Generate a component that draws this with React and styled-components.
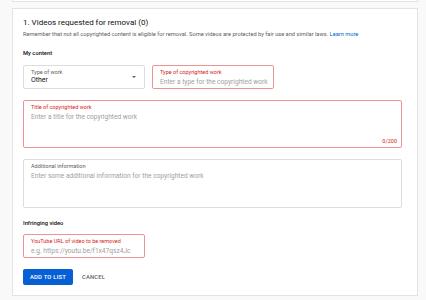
import React from 'react';
import styled, { createGlobalStyle } from 'styled-components';

const Global = createGlobalStyle`
  html, body { margin: 0; padding: 0; background: #f9f9f9; }
  body { font-family: Roboto, "Liberation Sans", sans-serif; color: #0d0d0d; }
`;

const Page = styled.div`
  width: 426px; height: 300px; box-sizing: border-box;
  padding: 0 8px 0 12px; overflow: hidden;
  display: flex; flex-direction: column; gap: 6px;
`;

const PrevCard = styled.div`
  height: 1px; background: #fff; border: 1px solid #e3e3e3; border-top: 0;
`;

const Card = styled.section`
  background: #fff; border: 1px solid #e3e3e3;
  padding: 9px 15px 10px 10px;
  display: flex; flex-direction: column;
`;

const Heading = styled.h2`
  margin: 0; font-size: 8px; font-weight: 400; line-height: 10px; color: #0d0d0d;
`;

const Note = styled.p`
  margin: 2px 0 0; font-size: 5.7px; line-height: 8px; color: #606060;
  a { color: #065fd4; text-decoration: none; }
`;

const Section = styled.h3`
  margin: 11px 0 ${p => p.$mb}px; font-size: 5.8px; font-weight: 500; line-height: 8px; color: #0d0d0d;
`;

const Row = styled.div`
  display: flex; gap: 7px; margin-bottom: 11px;
`;

const Field = styled.div`
  position: relative; box-sizing: border-box;
  width: ${p => p.$w}px;
  height: ${p => p.$h}px;
  border: 1px solid ${p => p.$error ? '#ee9393' : '#dddddd'};
  border-radius: 2px;
  padding: 2.5px 7px;
  margin-bottom: ${p => p.$mb || 0}px;
`;

const Label = styled.div`
  font-size: 5.5px; line-height: 7px; color: ${p => p.$error ? '#d41c1c' : '#606060'};
`;

const Value = styled.div`
  margin-top: ${p => p.$mt ?? 2.5}px;
  font-size: ${p => p.$ph ? 6.6 : 6.9}px; line-height: 9px;
  color: ${p => p.$ph ? '#a0a0a0' : '#0d0d0d'};
  white-space: nowrap;
`;

const Arrow = styled.span`
  position: absolute; right: 8px; top: 9.5px;
  width: 0; height: 0;
  border-left: 2.5px solid transparent; border-right: 2.5px solid transparent;
  border-top: 2.5px solid #606060;
`;

const Counter = styled.span`
  position: absolute; right: 4px; bottom: 2px;
  font-size: 5.5px; line-height: 8px; color: #d41c1c;
`;

const Actions = styled.div`
  display: flex; align-items: center; gap: 9px; margin-top: 11px;
`;

const Primary = styled.button`
  width: 50px; height: 16px; padding: 0; border: 0; border-radius: 2px;
  background: #065fd4; color: #fff;
  font-family: inherit; font-size: 5.9px; font-weight: 500; letter-spacing: 0.2px;
`;

const Text = styled.button`
  height: 16px; padding: 0; border: 0; background: none; color: #606060;
  font-family: inherit; font-size: 5.8px; font-weight: 500; letter-spacing: 0.2px;
`;

export default function App() {
  return (
    <Page>
      <Global />
      <PrevCard />
      <Card>
        <Heading>1. Videos requested for removal (0)</Heading>
        <Note>
          Remember that not all copyrighted content is eligible for removal. Some videos are protected by fair use and similar laws. <a href="#">Learn more</a>
        </Note>
        <Section $mb={8}>My content</Section>
        <Row>
          <Field $w={122} $h={24}>
            <Label>Type of work</Label>
            <Value $mt={0.5}>Other</Value>
            <Arrow />
          </Field>
          <Field $w={122} $h={24} $error>
            <Label $error>Type of copyrighted work</Label>
            <Value $ph>Enter a type for the copyrighted work</Value>
          </Field>
        </Row>
        <Field $w={379} $h={48} $error $mb={11}>
          <Label $error>Title of copyrighted work</Label>
          <Value $ph>Enter a title for the copyrighted work</Value>
          <Counter>0/200</Counter>
        </Field>
        <Field $w={379} $h={49}>
          <Label>Additional information</Label>
          <Value $ph>Enter some additional information for the copyrighted work</Value>
        </Field>
        <Section $mb={7}>Infringing video</Section>
        <Field $w={122} $h={24} $error>
          <Label $error>YouTube URL of video to be removed</Label>
          <Value $ph>e.g. https://youtu.be/f1x47qsz4Jc</Value>
        </Field>
        <Actions>
          <Primary>ADD TO LIST</Primary>
          <Text>CANCEL</Text>
        </Actions>
      </Card>
    </Page>
  );
}
